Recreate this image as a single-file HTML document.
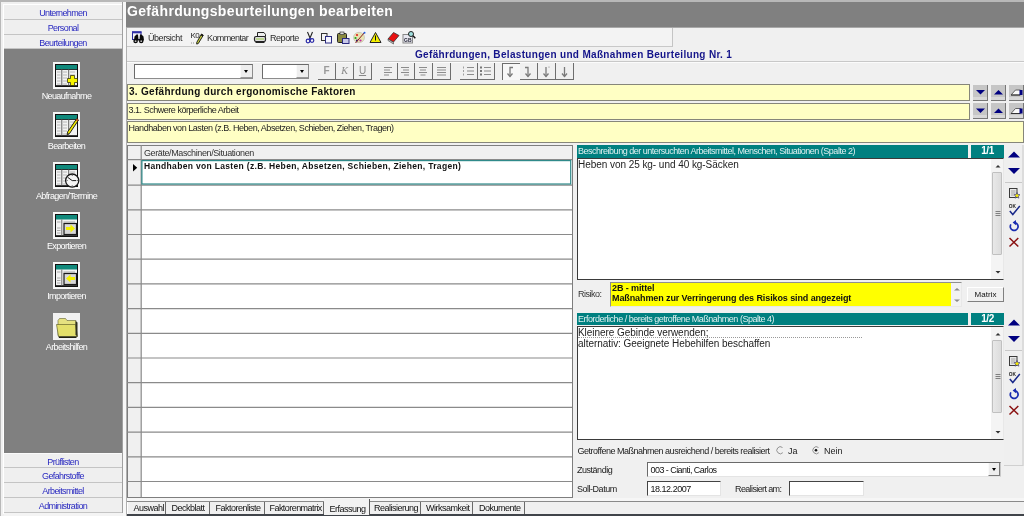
<!DOCTYPE html>
<html><head><meta charset="utf-8">
<style>
*{box-sizing:border-box;margin:0;padding:0}
html,body{width:1024px;height:516px;overflow:hidden;background:#f0f0f0;font-family:"Liberation Sans",sans-serif;position:relative}
.a{position:absolute}
svg.a{overflow:visible}
.t{position:absolute;white-space:nowrap;line-height:1}
.mb{position:absolute;left:4px;width:118px;height:15px;background:#efefef;border-bottom:1px solid #c4c4c4;color:#2a2ac0;font-size:9px;letter-spacing:-0.62px;text-align:center;line-height:17px}
.il{position:absolute;left:7px;width:119px;text-align:center;color:#ffffff;font-size:9px;letter-spacing:-0.62px;line-height:1}
.yl{position:absolute;background:#ffffc4;border:1px solid #86867a}
.nb{position:absolute;width:15px;height:16px;background:#c6c6c6;border-right:1px solid #777;border-bottom:1px solid #777;box-shadow:inset 0 -3px 0 #d8d8d8}
.teal{position:absolute;background:#008080;color:#dff0f0;font-size:9px;letter-spacing:-0.49px;line-height:12px;white-space:nowrap;overflow:hidden}
.wb{position:absolute;background:#fff;border-top:1px solid #555;border-left:1px solid #555;border-right:1px solid #e4e4e4;border-bottom:1px solid #e4e4e4}
.cb{position:absolute;background:#fff;border-top:1.5px solid #6a6a6a;border-left:1.5px solid #6a6a6a;border-right:1.5px solid #8c8c8c;border-bottom:1.5px solid #8c8c8c}
.dd{position:absolute;right:0;top:0;width:12px;height:100%;background:#eeeeee;border-left:1px solid #fafafa;border-bottom:1px solid #9a9a9a}
.dd:after{content:"";position:absolute;left:3px;top:50%;margin-top:-1px;border-left:2.5px solid transparent;border-right:2.5px solid transparent;border-top:3px solid #000}
.fb{position:absolute;top:63px;width:18px;height:17px;border-right:1.5px solid #6e6e6e;border-bottom:1.5px solid #6e6e6e;color:#8a8a8a;font-size:10px;text-align:center;line-height:16px}
.tab{position:absolute;top:502px;height:12px;border-right:1px solid #6a6a6a;font-size:9px;letter-spacing:-0.5px;line-height:13px;color:#111;white-space:nowrap}
.ttx{position:absolute;white-space:nowrap;font-size:9px;color:#2a2a2a;line-height:1;letter-spacing:-0.45px}
</style></head><body style="filter:blur(0.3px)">
<!-- top dark line -->
<div class="a" style="left:0;top:0;width:1024px;height:2px;background:#b8b8b8"></div>
<div class="a" style="left:0;top:0;width:1px;height:516px;background:#b8b8b8"></div>

<!-- left panel -->
<div class="a" style="left:3px;top:4px;width:1px;height:510px;background:#fff"></div>
<div class="a" style="left:3px;top:4px;width:120px;height:1px;background:#fff"></div>
<div class="a" style="left:122px;top:2px;width:1px;height:514px;background:#a0a0a0"></div>
<div class="a" style="left:123px;top:2px;width:3px;height:514px;background:#f8f8f8"></div>
<div class="mb" style="top:5px;height:15px">Unternehmen</div>
<div class="mb" style="top:20px;height:15px">Personal</div>
<div class="mb" style="top:35px;height:14px">Beurteilungen</div>
<div class="a" style="left:4px;top:49px;width:118px;height:404px;background:#808080"></div>

<svg class="a" style="left:0;top:0" width="124" height="360" viewBox="0 0 124 360">
 
 <!-- Neuaufnahme -->
 <g transform="translate(53,62)"><g>
   <rect x="0" y="0" width="27" height="27" fill="#f6f6f6"/>
   <rect x="2.5" y="2.5" width="22" height="22" fill="#f2f2f2" stroke="#101010" stroke-width="1"/>
   <rect x="3" y="3" width="21" height="4.5" fill="#118a7c"/>
   <line x1="3" y1="7.5" x2="24" y2="7.5" stroke="#101010" stroke-width="0.8"/>
   <rect x="3" y="23.2" width="22" height="1.8" fill="#101010"/>
   <rect x="8.3" y="7.5" width="1" height="16" fill="#606060"/>
   <rect x="15.2" y="7.5" width="1" height="16" fill="#606060"/>
   <g stroke="#b0b0b0" stroke-width="0.9">
    <line x1="4" y1="10" x2="7.5" y2="10"/><line x1="4" y1="13" x2="7.5" y2="13"/><line x1="4" y1="16" x2="7.5" y2="16"/><line x1="4" y1="19" x2="7.5" y2="19"/><line x1="4" y1="22" x2="7.5" y2="22"/>
    <line x1="10" y1="10" x2="14" y2="10"/><line x1="10" y1="13" x2="14" y2="13"/><line x1="10" y1="16" x2="14" y2="16"/><line x1="10" y1="19" x2="14" y2="19"/><line x1="10" y1="22" x2="14" y2="22"/>
    <line x1="17" y1="10" x2="22" y2="10"/><line x1="17" y1="13" x2="22" y2="13"/>
   </g>
  </g>
  <path d="M17.5 13.5h4v3h3v4h-3v3h-4v-3h-3v-4h3z" fill="#f8f400" stroke="#202000" stroke-width="0.7"/></g>
 <!-- Bearbeiten -->
 <g transform="translate(53,112)"><g>
   <rect x="0" y="0" width="27" height="27" fill="#f6f6f6"/>
   <rect x="2.5" y="2.5" width="22" height="22" fill="#f2f2f2" stroke="#101010" stroke-width="1"/>
   <rect x="3" y="3" width="21" height="4.5" fill="#118a7c"/>
   <line x1="3" y1="7.5" x2="24" y2="7.5" stroke="#101010" stroke-width="0.8"/>
   <rect x="3" y="23.2" width="22" height="1.8" fill="#101010"/>
   <rect x="8.3" y="7.5" width="1" height="16" fill="#606060"/>
   <rect x="15.2" y="7.5" width="1" height="16" fill="#606060"/>
   <g stroke="#b0b0b0" stroke-width="0.9">
    <line x1="4" y1="10" x2="7.5" y2="10"/><line x1="4" y1="13" x2="7.5" y2="13"/><line x1="4" y1="16" x2="7.5" y2="16"/><line x1="4" y1="19" x2="7.5" y2="19"/><line x1="4" y1="22" x2="7.5" y2="22"/>
    <line x1="10" y1="10" x2="14" y2="10"/><line x1="10" y1="13" x2="14" y2="13"/><line x1="10" y1="16" x2="14" y2="16"/><line x1="10" y1="19" x2="14" y2="19"/><line x1="10" y1="22" x2="14" y2="22"/>
    <line x1="17" y1="10" x2="22" y2="10"/><line x1="17" y1="13" x2="22" y2="13"/>
   </g>
  </g>
  <path d="M23.8 6.5l1.7 1.6-8.8 13.2-2.6 1.3 0.6-2.8z" fill="#f0e800" stroke="#101010" stroke-width="0.9"/>
  <path d="M23.8 6.5l1.7 1.6-1 1.4-1.7-1.6z" fill="#b04020"/></g>
 <!-- Abfragen -->
 <g transform="translate(53,162)"><g>
   <rect x="0" y="0" width="27" height="27" fill="#f6f6f6"/>
   <rect x="2.5" y="2.5" width="22" height="22" fill="#f2f2f2" stroke="#101010" stroke-width="1"/>
   <rect x="3" y="3" width="21" height="4.5" fill="#118a7c"/>
   <line x1="3" y1="7.5" x2="24" y2="7.5" stroke="#101010" stroke-width="0.8"/>
   <rect x="3" y="23.2" width="22" height="1.8" fill="#101010"/>
   <rect x="8.3" y="7.5" width="1" height="16" fill="#606060"/>
   <rect x="15.2" y="7.5" width="1" height="16" fill="#606060"/>
   <g stroke="#b0b0b0" stroke-width="0.9">
    <line x1="4" y1="10" x2="7.5" y2="10"/><line x1="4" y1="13" x2="7.5" y2="13"/><line x1="4" y1="16" x2="7.5" y2="16"/><line x1="4" y1="19" x2="7.5" y2="19"/><line x1="4" y1="22" x2="7.5" y2="22"/>
    <line x1="10" y1="10" x2="14" y2="10"/><line x1="10" y1="13" x2="14" y2="13"/><line x1="10" y1="16" x2="14" y2="16"/><line x1="10" y1="19" x2="14" y2="19"/><line x1="10" y1="22" x2="14" y2="22"/>
    <line x1="17" y1="10" x2="22" y2="10"/><line x1="17" y1="13" x2="22" y2="13"/>
   </g>
  </g>
  <circle cx="19.2" cy="18.6" r="6.6" fill="#f4f4f4" stroke="#181818" stroke-width="1.3"/>
  <path d="M14.8 15.4l4.4 3.2h4" fill="none" stroke="#181818" stroke-width="1"/>
  <g fill="#333"><circle cx="19.2" cy="13.5" r="0.5"/><circle cx="19.2" cy="23.7" r="0.5"/><circle cx="14.1" cy="18.6" r="0.5"/><circle cx="24.3" cy="18.6" r="0.5"/></g></g>
 <!-- Exportieren -->
 <g transform="translate(53,212)"><g>
   <rect x="0" y="0" width="27" height="27" fill="#f6f6f6"/>
   <rect x="2.5" y="2.5" width="22" height="22" fill="#f2f2f2" stroke="#101010" stroke-width="1"/>
   <rect x="3" y="3" width="21" height="4.5" fill="#118a7c"/>
   <rect x="3" y="23.2" width="22" height="1.8" fill="#101010"/>
   <rect x="8.3" y="7.5" width="1" height="16" fill="#707070"/>
   <g stroke="#a0a0a0" stroke-width="0.9">
    <line x1="4" y1="10" x2="7.5" y2="10"/><line x1="4" y1="16" x2="7.5" y2="16"/><line x1="4" y1="18.5" x2="7.5" y2="18.5"/><line x1="4" y1="21" x2="7.5" y2="21"/>
    <line x1="10.5" y1="10" x2="22" y2="10"/>
   </g>
   <rect x="11" y="11.5" width="12.5" height="11" fill="#d8d8d8" stroke="#1a1a1a" stroke-width="1.2"/>
  </g>
  <path d="M13 15h4.5v-2.5l4.5 4-4.5 4v-2.5h-4.5z" fill="#f4f000"/></g>
 <!-- Importieren -->
 <g transform="translate(53,262)"><g>
   <rect x="0" y="0" width="27" height="27" fill="#f6f6f6"/>
   <rect x="2.5" y="2.5" width="22" height="22" fill="#f2f2f2" stroke="#101010" stroke-width="1"/>
   <rect x="3" y="3" width="21" height="4.5" fill="#118a7c"/>
   <rect x="3" y="23.2" width="22" height="1.8" fill="#101010"/>
   <rect x="8.3" y="7.5" width="1" height="16" fill="#707070"/>
   <g stroke="#a0a0a0" stroke-width="0.9">
    <line x1="4" y1="10" x2="7.5" y2="10"/><line x1="4" y1="16" x2="7.5" y2="16"/><line x1="4" y1="18.5" x2="7.5" y2="18.5"/><line x1="4" y1="21" x2="7.5" y2="21"/>
    <line x1="10.5" y1="10" x2="22" y2="10"/>
   </g>
   <rect x="11" y="11.5" width="12.5" height="11" fill="#d8d8d8" stroke="#1a1a1a" stroke-width="1.2"/>
  </g>
  <path d="M22 15h-4.5v-2.5l-4.5 4 4.5 4v-2.5h4.5z" fill="#f4f000"/></g>
 <!-- Arbeitshilfen -->
 <g transform="translate(53,313)">
  <rect x="0" y="0" width="27" height="27" fill="#f2f2f2"/>
  <path d="M5 7.5l1.5-2h6l1.5 2h9v15h-18z" fill="#e6e280" stroke="#606030" stroke-width="0.6"/>
  <path d="M3.5 11.5h19l2 12h-19z" fill="#e4e06a" stroke="#505020" stroke-width="0.6"/>
  <path d="M5.5 23.5h19l-1.5 1.5h-17z" fill="#202010"/>
  <path d="M22.5 8v14l2 1.5v-14z" fill="#303020"/>
 </g>
</svg>
<div class="il" style="top:92px">Neuaufnahme</div>
<div class="il" style="top:142px">Bearbeiten</div>
<div class="il" style="top:192px">Abfragen/Termine</div>
<div class="il" style="top:242px">Exportieren</div>
<div class="il" style="top:292px">Importieren</div>
<div class="il" style="top:343px">Arbeitshilfen</div>

<div class="mb" style="top:453px;border-top:1px solid #fafafa">Prüflisten</div>
<div class="mb" style="top:468px">Gefahrstoffe</div>
<div class="mb" style="top:483px">Arbeitsmittel</div>
<div class="mb" style="top:498px">Administration</div>
<div class="a" style="left:4px;top:513px;width:119px;height:3px;background:#f4f4f4"></div>

<!-- right area -->
<div class="a" style="left:126px;top:2px;width:1px;height:514px;background:#b0b0b0"></div>
<div class="a" style="left:126px;top:2px;width:898px;height:25px;background:#808080"></div>
<div class="a" style="left:126px;top:27px;width:898px;height:1px;background:#a8a8a8"></div>
<div class="t" style="left:127px;top:3px;font-size:14px;font-weight:bold;color:#fff;letter-spacing:0.34px;line-height:16px">Gefährdungsbeurteilungen bearbeiten</div>

<!-- toolbar -->
<div class="a" style="left:127px;top:28px;width:546px;height:19px;border-right:1px solid #c4c4c4;border-bottom:1px solid #c8c8c8;background:#f3f3f3"></div>
<svg class="a" style="left:127px;top:27px" width="300" height="20" viewBox="0 0 300 20">
 <!-- Uebersicht: calendar + binoculars -->
 <rect x="5.5" y="5" width="8.5" height="7.5" fill="#f4f4f8" stroke="#2a2a9a" stroke-width="1"/>
 <rect x="5" y="4.3" width="9.5" height="2" fill="#3030a8"/>
 <g fill="#0a0a0a"><circle cx="8.6" cy="14" r="2.3"/><circle cx="14.2" cy="14" r="2.3"/><path d="M7.5 9.5l2-2h1.5l0.5 5h1l0.5-5h1.5l2 2 0.5 4h-10z"/></g>
 <g fill="#bbb"><circle cx="8.6" cy="14.2" r="0.9"/><circle cx="14.2" cy="14.2" r="0.9"/></g>
 <!-- Kommentar: K0 + pencil -->
 <text x="63.5" y="10.8" font-size="8" font-family="Liberation Sans" fill="#222" letter-spacing="-0.5">K0</text>
 <path d="M74.5 7l1.8 1.2-5 8.3-1.6 0.6 0.1-1.8z" fill="#c8d040" stroke="#111" stroke-width="0.9"/>
 <path d="M74.5 7l1.8 1.2-0.8 1.3-1.8-1.2z" fill="#111"/>
 <path d="M64 16h4" stroke="#777" stroke-width="0.8" stroke-dasharray="1 1"/>
 <!-- Reporte: printer -->
 <path d="M130.5 5.5h6.5l1.5 2v2h-8z" fill="#eee" stroke="#222" stroke-width="1"/>
 <rect x="127.5" y="9.5" width="11" height="5" rx="1.5" fill="#ddd" stroke="#222" stroke-width="1.2"/>
 <line x1="129" y1="12" x2="137" y2="12" stroke="#9c4" stroke-width="1"/>
 <rect x="128.5" y="14.5" width="9" height="1.5" fill="#222"/>
 <!-- scissors -->
 <path d="M180.5 5l2.5 6M185.5 5l-2.5 6" stroke="#222" stroke-width="1.1"/>
 <circle cx="181" cy="14" r="1.8" fill="none" stroke="#2a2aa8" stroke-width="1.2"/>
 <circle cx="185" cy="13.5" r="1.8" fill="none" stroke="#2a2aa8" stroke-width="1.2"/>
 <path d="M183 11l-1.5 1.5M183 11l1.5 1" stroke="#2a2aa8" stroke-width="1"/>
 <!-- copy -->
 <rect x="194.5" y="6.5" width="5.5" height="7" fill="#f4f4f4" stroke="#333" stroke-width="1"/>
 <rect x="198.5" y="9.5" width="6" height="6.5" fill="#f4f4ff" stroke="#2a2a80" stroke-width="1"/>
 <!-- paste -->
 <rect x="210.5" y="6.5" width="9" height="9" rx="1" fill="#8a8a40" stroke="#222" stroke-width="1"/>
 <rect x="213" y="5" width="4" height="2.5" fill="#ddd" stroke="#222" stroke-width="0.6"/>
 <rect x="215.5" y="11.5" width="6.5" height="5" fill="#c8c8e8" stroke="#2a2a80" stroke-width="1"/>
 <!-- palette -->
 <ellipse cx="232" cy="10.5" rx="5.5" ry="5.2" fill="#e8e4b0" stroke="#aaa" stroke-width="0.5"/>
 <circle cx="230" cy="8" r="1.1" fill="#e02020"/><circle cx="228.5" cy="11" r="1.1" fill="#20a020"/><circle cx="230" cy="13.5" r="1.1" fill="#202080"/><circle cx="233.5" cy="13.5" r="1.1" fill="#c020a0"/>
 <path d="M237.5 5.5l-9 10.5" stroke="#8a2020" stroke-width="1"/><circle cx="237.5" cy="5.8" r="1" fill="#2060e0"/>
 <!-- warning -->
 <path d="M248.5 5.5l5.5 10h-11z" fill="#f4f000" stroke="#222" stroke-width="1" stroke-linejoin="round"/>
 <rect x="248" y="8.5" width="1" height="5" fill="#111"/>
 <!-- red book -->
 <path d="M261 12l5.5-6.5 5.5 3-5.5 6.5z" fill="#e81010" stroke="#333" stroke-width="0.8"/>
 <path d="M261 12l5.5 3.5v1.5l-5.5-3.5z" fill="#ddd" stroke="#333" stroke-width="0.6"/>
 <!-- search doc -->
 <rect x="276" y="7.5" width="9.5" height="8.5" fill="#e8e8f0" stroke="#888" stroke-width="1"/>
 <text x="277" y="15" font-size="5" font-weight="bold" font-family="Liberation Sans" fill="#223">GB</text>
 <circle cx="284" cy="7" r="2.5" fill="#a0e0e0" stroke="#222" stroke-width="1"/>
 <path d="M286 8.8l2.3 2.5" stroke="#111" stroke-width="1.4"/>
</svg>
<div class="ttx" style="left:148px;top:34px">Übersicht</div>
<div class="ttx" style="left:207px;top:34px;letter-spacing:-0.6px">Kommentar</div>
<div class="ttx" style="left:270px;top:34px">Reporte</div>

<div class="t" style="left:415px;top:50px;font-size:10px;font-weight:bold;color:#14148a;letter-spacing:0.32px">Gefährdungen, Belastungen und Maßnahmen Beurteilung Nr. 1</div>
<div class="a" style="left:127px;top:61px;width:897px;height:1px;background:#c8c8c8"></div>
<div class="a" style="left:127px;top:62px;width:897px;height:1px;background:#fbfbfb"></div>

<!-- combos -->
<div class="cb" style="left:134px;top:64px;width:119px;height:15px"><div class="dd"></div></div>
<div class="cb" style="left:262px;top:64px;width:47px;height:15px"><div class="dd"></div></div>

<!-- format buttons -->
<div class="fb" style="left:318px;font-weight:bold;color:#9a9a9a">F</div>
<div class="fb" style="left:336px;font-style:italic;font-family:'Liberation Serif'">K</div>
<div class="fb" style="left:354px;text-decoration:underline">U</div>
<div class="fb" style="left:380px"></div>
<div class="fb" style="left:397px"></div>
<div class="fb" style="left:415px"></div>
<div class="fb" style="left:433px"></div>
<div class="fb" style="left:460px"></div>
<div class="fb" style="left:477px"></div>
<div class="fb" style="left:502px;border:none;border-left:1.5px solid #6e6e6e;border-top:1.5px solid #6e6e6e;background:#f8f8f8"></div>
<div class="fb" style="left:520px"></div>
<div class="fb" style="left:538px"></div>
<div class="fb" style="left:556px"></div>
<svg class="a" style="left:0;top:60px" width="600" height="24" viewBox="0 60 600 24">
 <g stroke="#8c8c8c" stroke-width="1">
  <!-- align left -->
  <path d="M384 67.5h8M384 70h6M384 72.5h8M384 75h5"/>
  <!-- align right -->
  <path d="M401 67.5h8M403 70h6M401 72.5h8M404 75h5"/>
  <!-- center -->
  <path d="M419 67.5h8M420 70h6M419 72.5h8M420.5 75h5"/>
  <!-- justify -->
  <path d="M437 67.5h9M437 70h9M437 72.5h9M437 75h9"/>
  <!-- numbered -->
  <path d="M467 67.5h7M467 71h7M467 74.5h7"/>
  <path d="M463.5 66.5v2M463.5 70v2M463.5 73.5v2" stroke-width="0.8"/>
  <!-- bullets -->
  <path d="M484 67.5h7M484 71h7M484 74.5h7"/>
 </g>
 <g fill="#777"><rect x="480" y="66.5" width="2" height="2"/><rect x="480" y="70" width="2" height="2"/><rect x="480" y="73.5" width="2" height="2"/></g>
 <g stroke="#7a7a7a" stroke-width="1.3" fill="none">
  <path d="M513 67.5h-3v9"/><path d="M507.5 73.5l2.5 3 2.5-3"/>
  <path d="M525 67.5h3v9"/><path d="M525.5 73.5l2.5 3 2.5-3"/>
  <path d="M546 67v9.5"/><path d="M543.5 73.5l2.5 3 2.5-3"/>
  <path d="M564.5 67v9.5"/><path d="M562 73.5l2.5 3 2.5-3"/>
 </g>
 <circle cx="549" cy="67" r="0.6" fill="#777"/>
</svg>

<!-- yellow rows -->
<div class="yl" style="left:127px;top:84px;width:843px;height:17px"></div>
<div class="t" style="left:129px;top:87px;font-size:10px;font-weight:bold;color:#111;letter-spacing:0.3px">3. Gefährdung durch ergonomische Faktoren</div>
<div class="yl" style="left:127px;top:103px;width:843px;height:17px"></div>
<div class="t" style="left:128.5px;top:106px;font-size:9px;color:#222;letter-spacing:-0.47px">3.1. Schwere körperliche Arbeit</div>
<div class="yl" style="left:127px;top:121px;width:897px;height:22px"></div>
<div class="t" style="left:128.5px;top:123.5px;font-size:9px;color:#222;letter-spacing:-0.45px">Handhaben von Lasten (z.B. Heben, Absetzen, Schieben, Ziehen, Tragen)</div>

<div class="nb" style="left:973px;top:85px"></div>
<div class="nb" style="left:991px;top:85px"></div>
<div class="nb" style="left:1009px;top:85px"></div>
<div class="nb" style="left:973px;top:103px"></div>
<div class="nb" style="left:991px;top:103px"></div>
<div class="nb" style="left:1009px;top:103px"></div>
<svg class="a" style="left:960px;top:80px" width="64" height="44" viewBox="960 80 64 44">
 <g fill="#000080">
  <path d="M976 90h9l-4.5 4.5z"/><path d="M994 94.5h9l-4.5-4.5z"/>
  <path d="M976 108.5h9l-4.5 4.5z"/><path d="M994 113h9l-4.5-4.5z"/>
 </g>
 <g>
  <path d="M1011 95l4.5-5h5v5z" fill="#fafafa" stroke="#555" stroke-width="0.9"/>
  <path d="M1011 95h9" stroke="#333" stroke-width="1"/>
  <rect x="1019.5" y="90" width="3" height="5" fill="#000080"/>
 </g>
 <g transform="translate(0,18.5)">
  <path d="M1011 95l4.5-5h5v5z" fill="#fafafa" stroke="#555" stroke-width="0.9"/>
  <path d="M1011 95h9" stroke="#333" stroke-width="1"/>
  <rect x="1019.5" y="90" width="3" height="5" fill="#000080"/>
 </g>
</svg>

<!-- grid -->
<div class="a" style="left:127px;top:145px;width:446px;height:353px;background:#fff;border:1px solid #7e7e7e"></div>
<div class="a" style="left:128px;top:146px;width:13px;height:351px;background:#f0f0f0"></div>
<div class="a" style="left:141px;top:146px;width:431px;height:14px;background:#f0f0f0"></div>
<svg class="a" style="left:0;top:0" width="600" height="516" viewBox="0 0 600 516">
 <g stroke="#8a8a8a" stroke-width="1.2">
  <line x1="141.2" y1="145" x2="141.2" y2="497.5"/>
  <line x1="127" y1="159.7" x2="572" y2="159.7"/>
  <line x1="127" y1="185.1" x2="572" y2="185.1"/><line x1="127" y1="209.8" x2="572" y2="209.8"/><line x1="127" y1="234.5" x2="572" y2="234.5"/><line x1="127" y1="259.2" x2="572" y2="259.2"/><line x1="127" y1="283.9" x2="572" y2="283.9"/><line x1="127" y1="308.6" x2="572" y2="308.6"/><line x1="127" y1="333.3" x2="572" y2="333.3"/><line x1="127" y1="358.0" x2="572" y2="358.0"/><line x1="127" y1="382.7" x2="572" y2="382.7"/><line x1="127" y1="407.4" x2="572" y2="407.4"/><line x1="127" y1="432.1" x2="572" y2="432.1"/><line x1="127" y1="456.8" x2="572" y2="456.8"/><line x1="127" y1="481.5" x2="572" y2="481.5"/>
 </g>
 <rect x="141.9" y="160.6" width="428.8" height="23.4" fill="none" stroke="#2f8a8a" stroke-width="1.2"/>
 <path d="M133 164v7.5l4.2-3.75z" fill="#000"/>
</svg>
<div class="t" style="left:144px;top:149px;font-size:9px;color:#333;letter-spacing:-0.4px">Geräte/Maschinen/Situationen</div>
<div class="t" style="left:144px;top:162px;font-size:8.5px;font-weight:bold;color:#111;letter-spacing:0.33px">Handhaben von Lasten (z.B. Heben, Absetzen, Schieben, Ziehen, Tragen)</div>

<!-- right panel -->
<div class="teal" style="left:577px;top:145px;width:391px;height:13px;padding-left:1px">Beschreibung der untersuchten Arbeitsmittel, Menschen, Situationen (Spalte 2)</div>
<div class="teal" style="left:971px;top:145px;width:33px;height:13px;font-weight:bold;font-size:10px;text-align:center;color:#fff">1/1</div>
<div class="wb" style="left:577px;top:158px;width:427px;height:122px;border-color:#3a3a3a;border-right-color:#e8e8e8"></div>
<div class="t" style="left:578px;top:160px;font-size:10px;color:#222;letter-spacing:-0.05px">Heben von 25 kg- und 40 kg-Säcken</div>
<!-- scrollbar 1 -->
<div class="a" style="left:991px;top:159px;width:12px;height:120px;background:#f4f4f4"></div>
<div class="a" style="left:992px;top:172px;width:10px;height:83px;background:linear-gradient(90deg,#e8e8e8,#dcdcdc);border:1px solid #c0c0c0;border-radius:1px"></div>

<div class="t" style="left:578px;top:290px;font-size:9px;color:#333;letter-spacing:-0.48px">Risiko:</div>
<div class="a" style="left:610px;top:282px;width:352px;height:25px;background:#f2f2f2;border-top:1px solid #909090;border-left:1px solid #909090;border-right:1px solid #e8e8e8;border-bottom:1px solid #e8e8e8"></div>
<div class="a" style="left:611px;top:283px;width:340px;height:23px;background:#ffff00"></div>
<div class="t" style="left:612px;top:284px;font-size:9px;font-weight:bold;color:#111;line-height:9.5px;letter-spacing:-0.1px">2B - mittel<br>Maßnahmen zur Verringerung des Risikos sind angezeigt</div>
<div class="a" style="left:967px;top:287px;width:37px;height:15px;background:#f0f0f0;border-top:1px solid #fff;border-left:1px solid #fff;border-right:1px solid #808080;border-bottom:1px solid #808080;font-size:8px;text-align:center;line-height:13px;color:#111">Matrix</div>

<div class="teal" style="left:577px;top:313px;width:391px;height:12px;padding-left:1px">Erforderliche / bereits getroffene Maßnahmen (Spalte 4)</div>
<div class="teal" style="left:971px;top:313px;width:33px;height:12px;font-weight:bold;font-size:10px;text-align:center;color:#fff">1/2</div>
<div class="wb" style="left:577px;top:326px;width:427px;height:114px;border-color:#3a3a3a;border-right-color:#e8e8e8"></div>
<div class="t" style="left:578px;top:328px;font-size:10px;color:#222;letter-spacing:-0.05px">Kleinere Gebinde verwenden;</div>
<div class="a" style="left:578px;top:337px;width:284px;height:1px;border-top:1px dotted #999"></div>
<div class="t" style="left:578px;top:339px;font-size:10px;color:#222;letter-spacing:-0.05px">alternativ: Geeignete Hebehilfen beschaffen</div>
<div class="a" style="left:991px;top:327px;width:12px;height:112px;background:#f4f4f4"></div>
<div class="a" style="left:992px;top:340px;width:10px;height:73px;background:linear-gradient(90deg,#e8e8e8,#dcdcdc);border:1px solid #c0c0c0;border-radius:1px"></div>

<svg class="a" style="left:940px;top:140px" width="84" height="330" viewBox="940 140 84 330">
 <!-- scroll arrows & grips -->
 <g fill="#333">
  <path d="M995.5 167.5l2.5-2.5 2.5 2.5z"/><path d="M995.5 271l2.5 2.5 2.5-2.5z"/>
  <path d="M995.5 335.5l2.5-2.5 2.5 2.5z"/><path d="M995.5 431l2.5 2.5 2.5-2.5z"/>
  <path d="M954 290.5l3-2.5 3 2.5z" fill="#8a8a8a"/><path d="M954 299.5l3 2.5 3-2.5z" fill="#8a8a8a"/>
 </g>
 <g stroke="#666" stroke-width="0.8">
  <path d="M995.5 211.5h5M995.5 213.5h5M995.5 215.5h5"/>
  <path d="M995.5 374.5h5M995.5 376.5h5M995.5 378.5h5"/>
 </g>
 <!-- right nav column -->
 <rect x="1004" y="145" width="19" height="321" fill="#efefef"/>
 <line x1="1023" y1="145" x2="1023" y2="466" stroke="#c8c8c8"/>
 <line x1="1004" y1="465.5" x2="1023" y2="465.5" stroke="#d0d0d0"/>
 <g fill="#000080">
  <path d="M1008 157.5h12l-6-6z"/><path d="M1008 168h12l-6 6z"/>
  <path d="M1008 325.5h12l-6-6z"/><path d="M1008 336h12l-6 6z"/>
 </g>
 <line x1="1005" y1="182.5" x2="1022" y2="182.5" stroke="#c8c8c8"/>
 <line x1="1005" y1="350.5" x2="1022" y2="350.5" stroke="#c8c8c8"/>
 <g>
  <rect x="1009.5" y="188.5" width="7.5" height="9" fill="#e8e8e8" stroke="#3a3a3a" stroke-width="1"/>
  <path d="M1011 191h4.5M1011 193h4.5M1011 195h3" stroke="#888" stroke-width="0.7"/>
  <path d="M1017 192.5l0.9 2 2.1 0.2-1.6 1.4 0.5 2.1-1.9-1.1-1.9 1.1 0.5-2.1-1.6-1.4 2.1-0.2z" fill="#f4e800" stroke="#2a2a90" stroke-width="0.6"/>
  <text x="1008.8" y="207.8" font-size="4.8" font-weight="bold" font-family="Liberation Sans" fill="#222">OK</text>
  <path d="M1009.8 211l3 3.5 7-8.5" fill="none" stroke="#1a2a8a" stroke-width="1.5"/>
  <path d="M1010.9 224.4A3.9 3.9 0 1 0 1014.4 222.6" fill="none" stroke="#1a2cb0" stroke-width="1.7"/>
  <path d="M1012.6 222.6l3.4-2.6v5.2z" fill="#1a2cb0"/>
  <path d="M1009.5 238l8.8 8.5M1018.3 238l-8.8 8.5" stroke="#8a1212" stroke-width="1.5"/>
 </g>
 <g transform="translate(0,168)">
  <rect x="1009.5" y="188.5" width="7.5" height="9" fill="#e8e8e8" stroke="#3a3a3a" stroke-width="1"/>
  <path d="M1011 191h4.5M1011 193h4.5M1011 195h3" stroke="#888" stroke-width="0.7"/>
  <path d="M1017 192.5l0.9 2 2.1 0.2-1.6 1.4 0.5 2.1-1.9-1.1-1.9 1.1 0.5-2.1-1.6-1.4 2.1-0.2z" fill="#f4e800" stroke="#2a2a90" stroke-width="0.6"/>
  <text x="1008.8" y="207.8" font-size="4.8" font-weight="bold" font-family="Liberation Sans" fill="#222">OK</text>
  <path d="M1009.8 211l3 3.5 7-8.5" fill="none" stroke="#1a2a8a" stroke-width="1.5"/>
  <path d="M1010.9 224.4A3.9 3.9 0 1 0 1014.4 222.6" fill="none" stroke="#1a2cb0" stroke-width="1.7"/>
  <path d="M1012.6 222.6l3.4-2.6v5.2z" fill="#1a2cb0"/>
  <path d="M1009.5 238l8.8 8.5M1018.3 238l-8.8 8.5" stroke="#8a1212" stroke-width="1.5"/>
 </g>
</svg>

<div class="t" style="left:577.5px;top:447px;font-size:9px;color:#222;letter-spacing:-0.49px">Getroffene Maßnahmen ausreichend / bereits realisiert</div>
<svg class="a" style="left:770px;top:440px" width="60" height="20" viewBox="770 440 60 20">
 <path d="M782.5 447.5a3.5 3.5 0 1 0 0.3 5.2" fill="none" stroke="#888" stroke-width="0.9"/>
 <path d="M818.5 447.5a3.5 3.5 0 1 0 0.3 5.2" fill="none" stroke="#888" stroke-width="0.9"/>
 <circle cx="816" cy="450.3" r="1.3" fill="#111"/>
</svg>
<div class="t" style="left:788px;top:447px;font-size:9px;color:#222">Ja</div>
<div class="t" style="left:824px;top:447px;font-size:9px;color:#222">Nein</div>
<div class="t" style="left:577px;top:466px;font-size:9px;color:#222;letter-spacing:-0.48px">Zuständig</div>
<div class="cb" style="left:647px;top:462px;width:354px;height:15px;border-width:1.5px;border-right-color:#c8c8c8;border-bottom-color:#e4e4e4"><div class="dd" style="width:12px;border-right:1px solid #7a7a7a;border-bottom:1px solid #7a7a7a"></div></div>
<div class="t" style="left:650.5px;top:466px;font-size:9px;color:#111;letter-spacing:-0.55px">003 - Cianti, Carlos</div>
<div class="t" style="left:577px;top:485px;font-size:9px;color:#222;letter-spacing:-0.48px">Soll-Datum</div>
<div class="wb" style="left:647px;top:481px;width:74px;height:15px;border-top:1.5px solid #444;border-left:1.5px solid #444"></div>
<div class="t" style="left:650.5px;top:485px;font-size:9px;color:#111;letter-spacing:-0.48px">18.12.2007</div>
<div class="t" style="left:735px;top:485px;font-size:9px;color:#222;letter-spacing:-0.62px">Realisiert am:</div>
<div class="wb" style="left:789px;top:481px;width:75px;height:15px;border-top:1.5px solid #444;border-left:1.5px solid #444"></div>

<!-- tabs -->
<div class="a" style="left:127px;top:498px;width:897px;height:3px;background:#f6f6f6"></div>
<div class="a" style="left:127px;top:501px;width:897px;height:1px;background:#8a8a8a"></div>
<div class="a" style="left:127px;top:514px;width:897px;height:2px;background:#40444a"></div>
<div class="tab" style="left:127px;width:39px;padding-left:5.5px;border-left:1px solid #fff">Auswahl</div>
<div class="tab" style="left:166px;width:44px;padding-left:5.5px">Deckblatt</div>
<div class="tab" style="left:210px;width:55px;padding-left:5.5px">Faktorenliste</div>
<div class="tab" style="left:265px;width:59px;padding-left:4.5px;letter-spacing:-0.55px">Faktorenmatrix</div>
<div class="tab" style="left:324px;width:46px;top:499px;height:16px;padding-left:5.5px;line-height:21px;border-top:none;background:#f2f2f2;border-right:1.5px solid #555">Erfassung</div>
<div class="tab" style="left:370px;width:51px;padding-left:4px">Realisierung</div>
<div class="tab" style="left:421px;width:52px;padding-left:5px">Wirksamkeit</div>
<div class="tab" style="left:473px;width:51.5px;padding-left:6px">Dokumente</div>
</body></html>
